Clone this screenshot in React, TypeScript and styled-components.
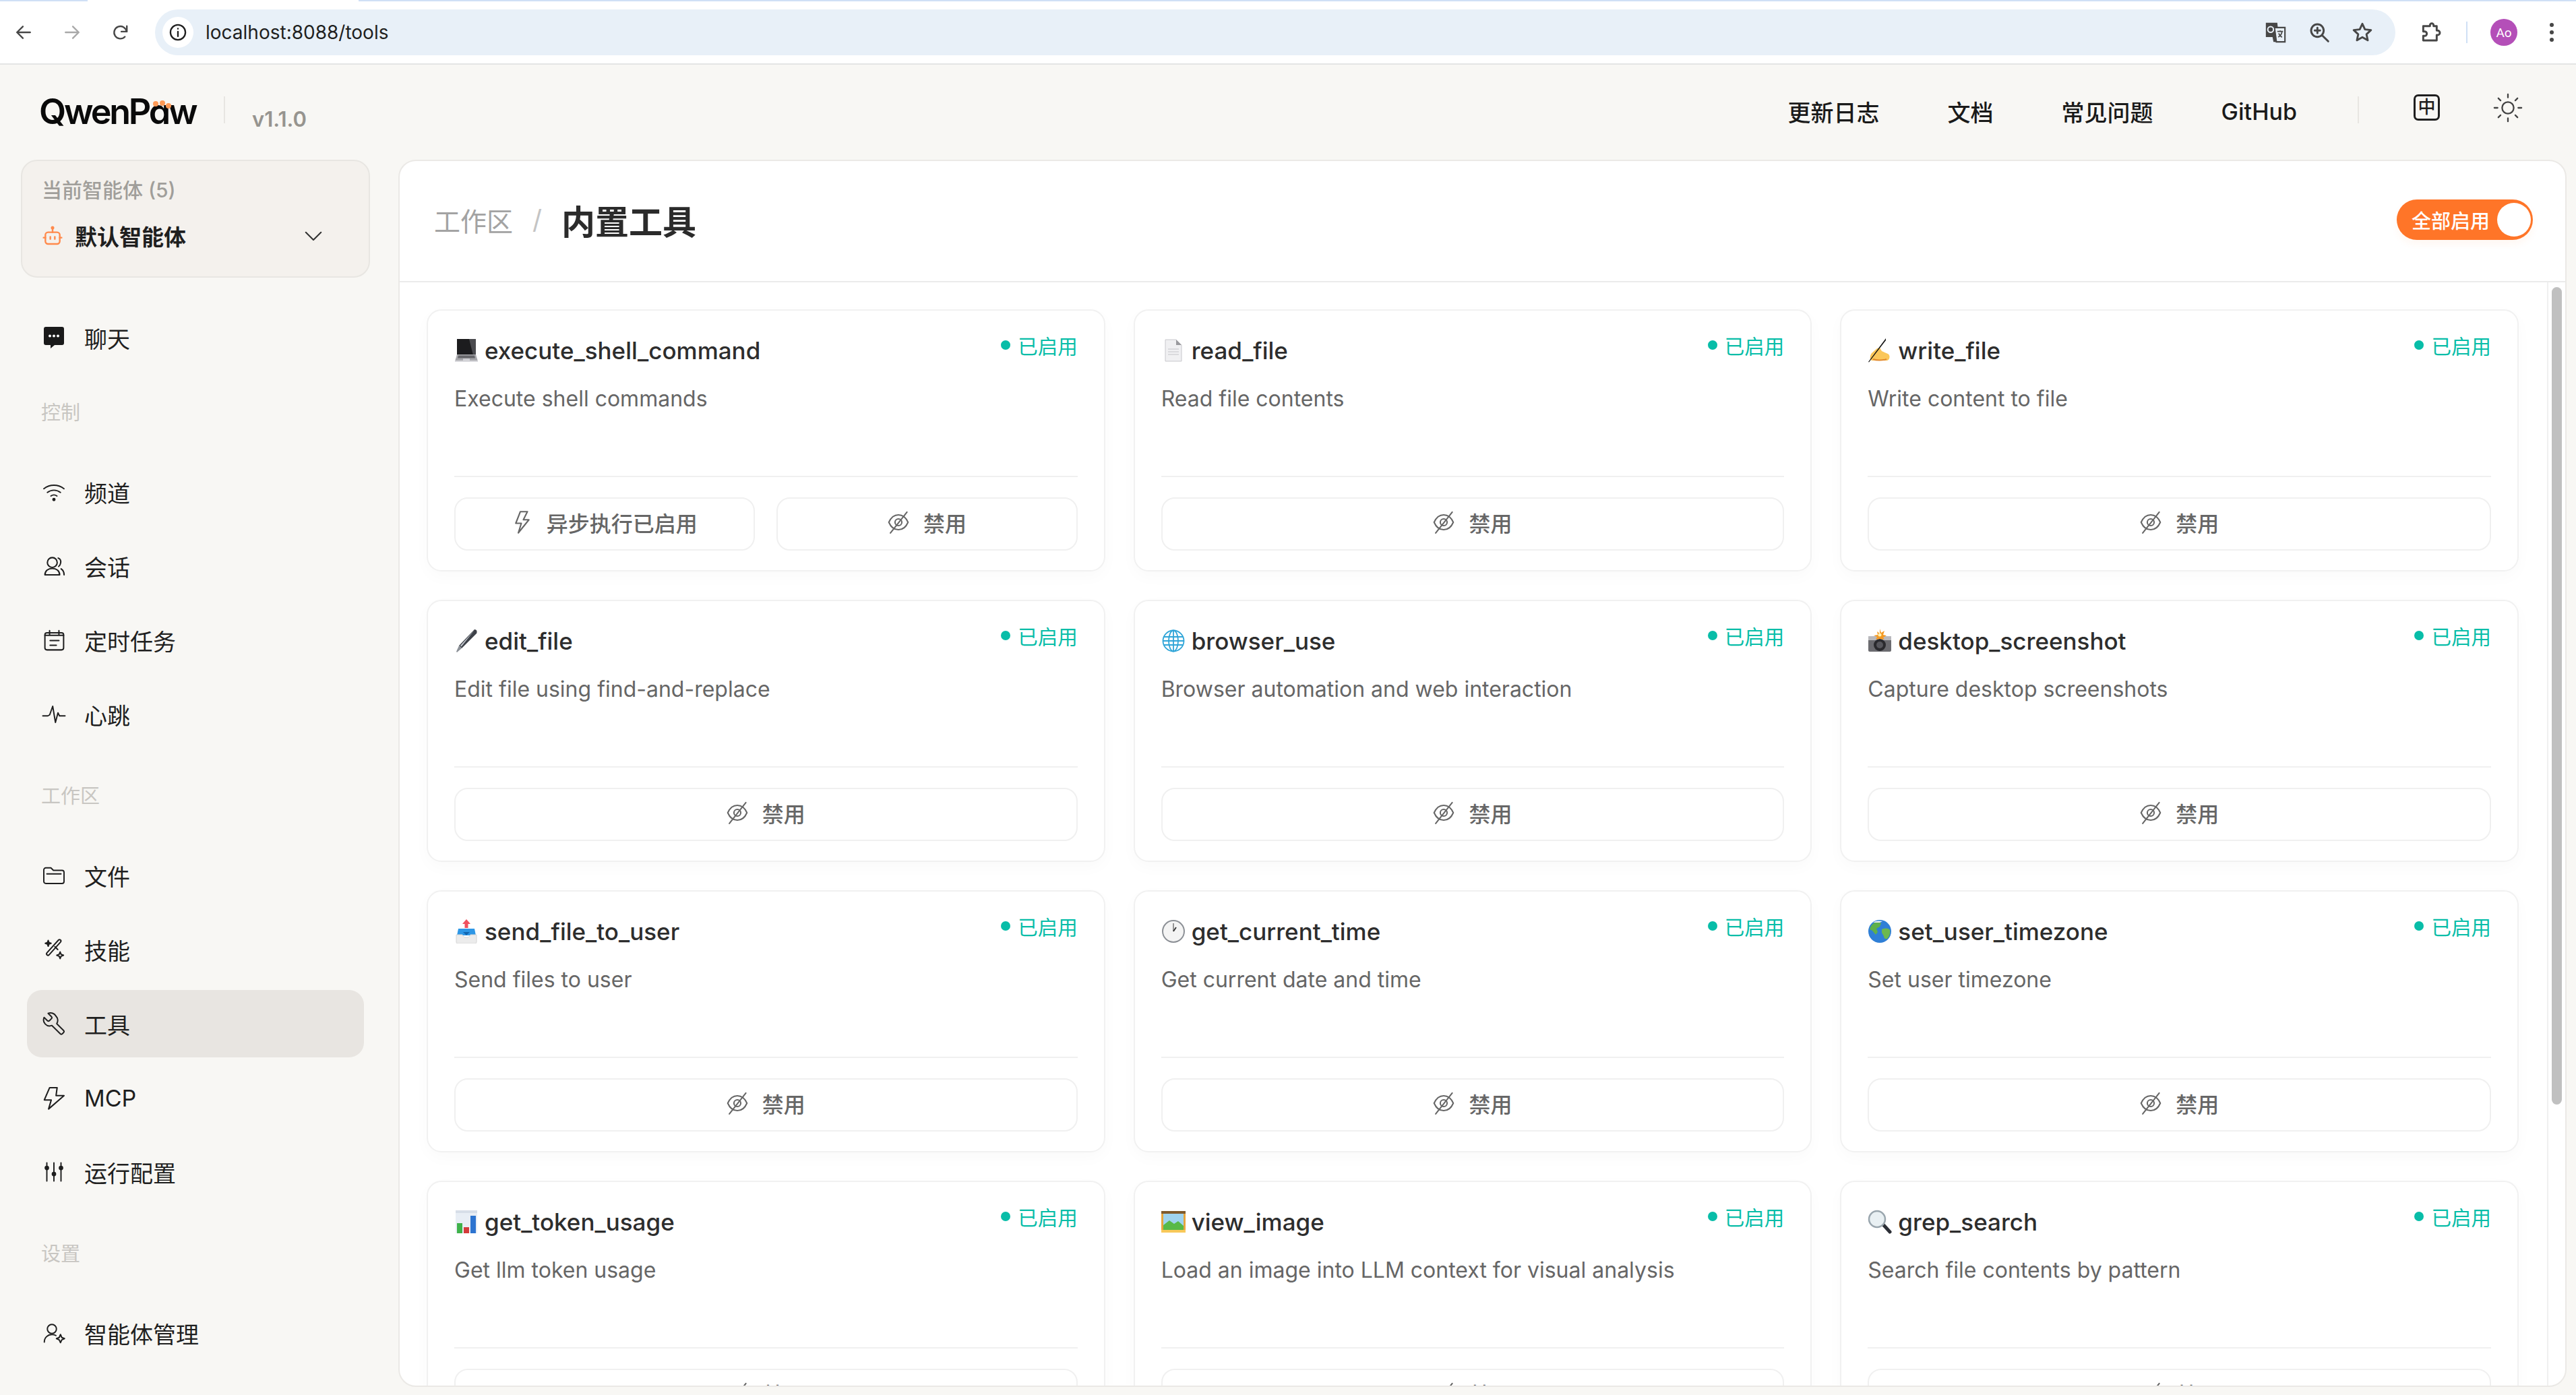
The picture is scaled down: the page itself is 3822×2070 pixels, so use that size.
import React from "react";
import styled, { createGlobalStyle } from "styled-components";

const FONT = `Inter, "Noto Sans CJK SC", "Noto Sans", sans-serif`;

const Global = createGlobalStyle`
  * { box-sizing: border-box; }
  html, body { margin: 0; padding: 0; background: #f8f7f4; }
  body { font-family: ${FONT}; overflow: hidden; }
`;

const Page = styled.div`
  width: 3822px; height: 2070px; display: flex; flex-direction: column;
  overflow: hidden; background: #f8f7f4; color: #1f1f1f;
`;

/* browser chrome */
const TabStrip = styled.div`
  height: 2px; flex: none;
  background: linear-gradient(90deg, #cfe0f5 0 130px, #fff 130px 532px, #cfe0f5 532px);
`;
const Chrome = styled.div`
  height: 94px; flex: none; background: #fff; border-bottom: 2px solid #e4e4e4;
  display: flex; align-items: center; padding: 0 0 0 22px;
`;
const NavCluster = styled.div`
  display: flex; align-items: center; gap: 46px; width: 208px; flex: none; color: #474747;
  svg:nth-child(2) { color: #a9a9a9; }
`;
const Omni = styled.div`
  width: 3324px; height: 68px; flex: none; border-radius: 34px; background: #e8f0f8;
  display: flex; align-items: center; padding: 0 33px 0 11px;
`;
const InfoChip = styled.div`
  width: 46px; height: 46px; border-radius: 50%; background: #fff; flex: none;
  display: flex; align-items: center; justify-content: center; color: #1f1f1f;
`;
const Url = styled.div`
  margin-left: 18px; font-size: 28px; color: #1f1f1f; flex: 1;
`;
const OmniIcons = styled.div`
  display: flex; align-items: center; gap: 32px; color: #474747;
`;
const ChromeRight = styled.div`
  display: flex; align-items: center; margin-left: 36px; color: #474747;
`;
const ChromeDivider = styled.div`
  width: 2px; height: 32px; background: #cfe0f5; margin: 0 34px 0 37px;
`;
const Avatar = styled.div`
  width: 40px; height: 40px; border-radius: 50%; background: #b44fb8; color: #fff;
  font-size: 19px; display: flex; align-items: center; justify-content: center; font-family: Roboto, sans-serif;
`;
const Dots = styled.div`
  margin-left: 48px; display: flex; flex-direction: column; gap: 5px;
  i { width: 6px; height: 6px; border-radius: 50%; background: #474747; display: block; }
`;

/* app header */
const AppHeader = styled.header`
  height: 141px; flex: none; display: flex; align-items: center; padding: 0 0 0 58px;
`;
const LogoWrap = styled.div`
  position: relative; width: 235px; height: 60px; margin-top: -2px; display: flex; align-items: center;
`;
const LogoText = styled.span`
  font-size: 52px; font-weight: 600; color: #0a0a0a; letter-spacing: -3.2px; line-height: 60px;
  font-feature-settings: "cv11" 1; white-space: nowrap;
`;
const PawDot = styled.i<{ $x: number; $y: number }>`
  position: absolute; width: 8px; height: 8px; border-radius: 50%; background: #ff9a56;
  left: ${(p) => p.$x}px; top: ${(p) => p.$y}px;
`;
const LogoDivider = styled.div`
  width: 2px; height: 40px; background: #e8e6e2; margin: -8px 0 0 39px;
`;
const Version = styled.span`
  margin: 20px 0 0 40px; font-size: 31px; font-weight: 600; color: #96948f;
`;
const TopNav = styled.nav`
  margin-left: auto; display: flex; align-items: center; gap: 101px; margin-right: 90px;
  font-size: 34px; font-weight: 500; color: #1a1a1a; margin-top: -2px;
`;
const TopDivider = styled.div`
  width: 2px; height: 40px; background: #e8e6e2; margin-top: -8px;
`;
const LangIcon = styled.div`
  width: 39px; height: 39px; border: 3px solid #1f1f1f; border-radius: 7px; margin: -14px 0 0 81px;
  font-size: 26px; font-weight: 500; line-height: 32px; text-align: center; color: #1f1f1f;
`;
const SunWrap = styled.div`
  margin: -14px 78px 0 78px; color: #444; display: flex;
`;

/* layout */
const Body = styled.div`
  flex: 1; min-height: 0; display: flex; padding: 0 14px 12px 0;
`;
const Sidebar = styled.aside`
  width: 591px; flex: none; padding-left: 31px; overflow: hidden;
`;
const AgentCard = styled.div`
  width: 518px; height: 175px; border: 2px solid #e8e6e2; border-radius: 24px; background: #f4f1ed;
  padding: 21px 64px 0 29px;
`;
const AgentLabel = styled.div`
  font-size: 30px; line-height: 44px; color: #a09e9a; font-weight: 500;
`;
const AgentRow = styled.div`
  display: flex; align-items: center; margin-top: 24px; height: 44px;
`;
const AgentName = styled.span`
  font-size: 33px; font-weight: 700; color: #1f1f1f; margin-left: 17px; flex: 1;
`;
const Nav = styled.nav`
  display: flex; flex-direction: column; gap: 10px; margin: 39px 0 0 9px; width: 500px;
`;
const NavItem = styled.div<{ $active?: boolean }>`
  height: 100px; flex: none; display: flex; align-items: center; gap: 29px; padding-left: 24px;
  border-radius: 22px; font-size: 34px; color: #1f1f1f;
  background: ${(p) => (p.$active ? "#e8e5e1" : "transparent")};
`;
const NavIconBox = styled.span`
  width: 32px; height: 32px; flex: none; display: flex; align-items: center; justify-content: center;
`;
const NavLabel = styled.div<{ $first?: boolean }>`
  height: 40px; line-height: 40px; font-size: 29px; color: #c8c6c2; padding-left: 21px; flex: none;
  margin: ${(p) => (p.$first ? "32px" : "42px")} 0 ${(p) => (p.$first ? "37px" : "37px")};
`;

/* main panel */
const Panel = styled.main`
  flex: 1; min-width: 0; background: #fff; border: 2px solid #ebe9e6; border-radius: 26px;
  display: flex; flex-direction: column; overflow: hidden;
`;
const PanelHead = styled.div`
  height: 180px; flex: none; border-bottom: 2px solid #ebebeb; display: flex; align-items: center;
  padding: 0 48px 5px 51px;
`;
const Crumb = styled.span`
  font-size: 39px; color: #a3a3a3;
`;
const Slash = styled.span`
  font-size: 39px; color: #c4c4c4; margin: 0 29px;
`;
const PageTitle = styled.h1`
  margin: 0; font-size: 50px; font-weight: 700; color: #2b2b2b; flex: 1;
`;
const Toggle = styled.div`
  width: 202px; height: 60px; border-radius: 30px; background: #ff7528; flex: none;
  display: flex; align-items: center; justify-content: space-between; padding: 0 3px 0 22px;
  box-shadow: 0 6px 12px rgba(255, 117, 40, 0.06);
  color: #fff; font-size: 29px; font-weight: 500;
`;
const Knob = styled.i`
  width: 50px; height: 50px; border-radius: 50%; background: #fff; display: block;
`;
const PanelBody = styled.div`
  flex: 1; min-height: 0; display: flex;
`;
const Scroller = styled.div`
  flex: 1; min-width: 0; overflow: hidden; padding: 40px 42px 0 40px;
`;
const Track = styled.div`
  width: 27px; flex: none; border-left: 2px solid #f0f0f0; padding: 7px 0 0 5px;
`;
const Thumb = styled.div`
  width: 15px; height: 1213px; border-radius: 8px; background: #c0c0c0;
`;
const Grid = styled.div`
  display: grid; grid-template-columns: repeat(3, 1fr); column-gap: 42px; row-gap: 42px;
`;
const Card = styled.article`
  height: 389px; border: 2px solid #f1f1f1; border-radius: 22px; background: #fff;
  box-shadow: 0 8px 24px rgba(0, 0, 0, 0.025);
  padding: 0 39px 29px 39px; display: flex; flex-direction: column;
`;
const CardHead = styled.div`
  display: flex; justify-content: space-between; align-items: flex-start;
`;
const Title = styled.div`
  margin-top: 36px; height: 46px; display: flex; align-items: center; gap: 9px;
  font-size: 35px; font-weight: 500; color: #2d2d2d;
`;
const Status = styled.div`
  margin-top: 33px; height: 36px; display: flex; align-items: center; gap: 11px;
  font-size: 29.500px; color: #08bda8;
  &::before { content: ""; width: 14px; height: 14px; border-radius: 50%; background: #08bda8; }
`;
const Desc = styled.div`
  margin-top: 27px; font-size: 32px; line-height: 44px; color: #666;
`;
const CardFoot = styled.div`
  margin-top: auto; border-top: 2px solid #f0f0f0; padding-top: 30px; display: flex; gap: 32px;
`;
const ActionButton = styled.div`
  flex: 1; height: 79px; border: 2px solid #f0f0f0; border-radius: 20px; background: #fff;
  display: flex; align-items: center; justify-content: center; gap: 21px; padding-bottom: 6px;
  font-size: 32px; font-weight: 500; color: #666;
`;
const ButtonIcon = styled.span<{ $w: number }>`
  width: ${(p) => p.$w}px; height: 34px; flex: none; display: flex; align-items: center; justify-content: center;
`;

/* icons */
const Line = styled.svg.attrs({ fill: "none", stroke: "currentColor", strokeLinecap: "round", strokeLinejoin: "round" })`
  display: block; flex: none;
`;
type IP = { s?: number; w?: number; c?: string; children: React.ReactNode };
const Ico = ({ s = 32, w = 1.6, c, children }: IP) => (
  <Line width={s} height={s} viewBox="0 0 24 24" strokeWidth={w} style={c ? { color: c } : undefined}>{children}</Line>
);

const EyeOff = () => (
  <ButtonIcon $w={32}>
    <Ico s={38} w={1.300}>
      <path d="M3 12c2-4.600 5.200-7 9-7s7 2.400 9 7c-2 4.600-5.200 7-9 7s-7-2.400-9-7Z" />
      <circle cx="12" cy="12" r="3.200" />
      <path d="M20 2.500 4.500 22" />
    </Ico>
  </ButtonIcon>
);
const Bolt = () => (
  <ButtonIcon $w={30}>
    <Ico s={36} w={1.400}>
      <path d="M17 1.500H10L5.500 13H11L8 22.500 18.500 9.500H13Z" />
    </Ico>
  </ButtonIcon>
);

const Emoji = ({ name }: { name: string }) => {
  const art: Record<string, React.ReactNode> = {
    laptop: (
      <>
        <rect x="4" y="1" width="28" height="24" fill="#1c1c1e" />
        <path d="M22 1h10v24h-4Z" fill="#4a4a4e" />
        <path d="M4 24h28l3 10H1Z" fill="#a8a8ac" />
        <path d="M6 25.500h24l1 4H5Z" fill="#66666a" />
        <rect x="13" y="30" width="10" height="4" fill="#d0d0d4" />
        <rect x="1" y="33" width="34" height="2" fill="#d8d8dc" />
      </>
    ),
    page: (
      <>
        <path d="M6 2h16l8 8v24H6Z" fill="#f0f0f2" stroke="#c8c8cc" />
        <path d="M22 2v8h8Z" fill="#9a9a9e" />
        <path d="M10 16h16M10 20h16M10 24h16" stroke="#c4c4c8" strokeWidth="1.200" />
      </>
    ),
    write: (
      <>
        <path d="M6 33c-3-2-3-7 0-11l8-7 4-1 3 5 9 4c4 2 3 9-1 10Z" fill="#fbc75a" />
        <path d="M8 31c5 2 14 2 20 0" stroke="#e28a2e" strokeWidth="2" fill="none" />
        <path d="M27 0 1 35l1 .5L27 3Z" fill="#111" />
      </>
    ),
    pen: (
      <>
        <path d="M30 1c4 0 4 4 3 6L11 29 7 25Z" fill="#3d4148" />
        <path d="M30 2 9 25l1.500 1.500Z" fill="#c7ccd3" />
        <path d="M7 25l4 4-7 6-1-1Z" fill="#8b9097" />
      </>
    ),
    globe: (
      <g fill="none" stroke="#2fa5d8" strokeWidth="1.800">
        <circle cx="18" cy="18" r="15.500" />
        <ellipse cx="18" cy="18" rx="7" ry="15.500" />
        <path d="M18 2.500v31M3 12h30M3 24h30M2.500 18h31" />
      </g>
    ),
    camera: (
      <>
        <rect x="1" y="11" width="34" height="23" rx="2" fill="#6b6b70" />
        <rect x="1" y="11" width="34" height="6" fill="#b8b8bc" />
        <circle cx="18" cy="24" r="9" fill="#2a2a2e" />
        <circle cx="18" cy="24" r="5" fill="#56565c" />
        <path d="M18 0l2 6 5-3-2 6 5 1-5 3 2 3-7-1-6 1 2-4-5-2 6-1-1-5 4 3Z" fill="#f59a23" />
        <circle cx="18" cy="9" r="2.500" fill="#fff2b0" />
      </>
    ),
    outbox: (
      <>
        <path d="M18 0l6 7h-3.500v6h-5V7H12Z" fill="#f0525f" />
        <path d="M6 14h24l2 10H4Z" fill="#2e97e6" />
        <path d="M18 24l-5-5h10Z" fill="#1266b0" />
        <path d="M3 23h9c1 3 3 4 6 4s5-1 6-4h9v11a2 2 0 0 1-2 2H5a2 2 0 0 1-2-2Z" fill="#ececec" stroke="#d4d4d4" />
      </>
    ),
    clock: (
      <>
        <circle cx="18" cy="18" r="17" fill="#8c9096" />
        <circle cx="18" cy="18" r="15" fill="#f4f4f4" />
        <path d="M18 18V6" stroke="#777" strokeWidth="1.500" />
        <path d="M18 18l4-6" stroke="#333" strokeWidth="1.800" />
      </>
    ),
    earth: (
      <>
        <circle cx="18" cy="18" r="17" fill="#2f7fd6" />
        <path d="M9 6c4-2 9-2 11 0l-2 5-5 3 2 5-3 4-5-6-4-2c1-4 3-7 6-9Z" fill="#5fb04a" />
        <path d="M21 15c4-2 9-2 12 1 1 5-1 10-4 13-3 1-5-1-5-4l-3-5Z" fill="#6cb84f" />
        <path d="M8 5c3-3 10-3 14-2l-4 2Z" fill="#e8edf0" />
      </>
    ),
    chart: (
      <>
        <rect x="2" y="1" width="32" height="34" fill="#e8eef5" />
        <rect x="2" y="1" width="32" height="4" fill="#d7dee8" />
        <rect x="4" y="20" width="8" height="15" fill="#3fb24a" />
        <rect x="14" y="26" width="8" height="9" fill="#d43a3a" />
        <rect x="24" y="9" width="8" height="26" fill="#2d74d0" />
      </>
    ),
    image: (
      <>
        <rect x="0" y="2" width="36" height="32" fill="#e7a63d" />
        <rect x="3" y="5" width="30" height="26" fill="#9fd3ee" />
        <path d="M3 23l9-7 7 5 6-4 8 7v7H3Z" fill="#58b947" />
        <rect x="0" y="2" width="36" height="4" fill="#7f5a2c" />
        <rect x="0" y="30" width="36" height="4" fill="#f8c95a" />
      </>
    ),
    search: (
      <>
        <path d="M22 21l11 12" stroke="#2c2f36" strokeWidth="5" strokeLinecap="round" />
        <circle cx="14" cy="14" r="12" fill="#e9f0f3" stroke="#9aa6ae" strokeWidth="2.500" />
      </>
    ),
  };
  return <svg width="36" height="36" viewBox="0 0 36 36" style={{ display: "block", flex: "none" }}>{art[name]}</svg>;
};

const tools = [
  ["laptop", "execute_shell_command", "Execute shell commands", true],
  ["page", "read_file", "Read file contents"],
  ["write", "write_file", "Write content to file"],
  ["pen", "edit_file", "Edit file using find-and-replace"],
  ["globe", "browser_use", "Browser automation and web interaction"],
  ["camera", "desktop_screenshot", "Capture desktop screenshots"],
  ["outbox", "send_file_to_user", "Send files to user"],
  ["clock", "get_current_time", "Get current date and time"],
  ["earth", "set_user_timezone", "Set user timezone"],
  ["chart", "get_token_usage", "Get llm token usage"],
  ["image", "view_image", "Load an image into LLM context for visual analysis"],
  ["search", "grep_search", "Search file contents by pattern"],
] as [string, string, string, boolean?][];

const navIcons: Record<string, React.ReactNode> = {
  chat: (
    <svg width="32" height="34" viewBox="0 0 32 34" style={{ display: "block", flex: "none" }}>
      <path d="M4 1h24a3 3 0 0 1 3 3v21a3 3 0 0 1-3 3H17l-6 5v-5H4a3 3 0 0 1-3-3V4a3 3 0 0 1 3-3Z" fill="#1a1a1a" />
      <circle cx="10" cy="14.500" r="2" fill="#fff" /><circle cx="16" cy="14.500" r="2" fill="#fff" /><circle cx="22" cy="14.500" r="2" fill="#fff" />
    </svg>
  ),
  wifi: <Ico s={36} w={1.300}><path d="M2 8.800c6-4.600 14-4.600 20 0" /><path d="M5.500 12.500c4-3 9-3 13 0" /><path d="M9 16c1.800-1.300 4.200-1.300 6 0" /><circle cx="12" cy="19.500" r="1" fill="currentColor" /></Ico>,
  users: <Ico s={35} w={1.400}><circle cx="10" cy="8" r="5" /><path d="M2.500 20.500c0-4 3.300-6.500 7.500-6.500s7.500 2.500 7.500 6.500Z" /><path d="M16 3.500c2 .8 3 2.500 2.500 5s-1.200 3-2 3.500" /><path d="M19 14.500c2 1.300 3 3.500 3 6" /></Ico>,
  calendar: <Ico s={37} w={1.300}><rect x="3" y="4.500" width="18" height="16.500" rx="2" /><path d="M7.500 2.500v4M16.500 2.500v4M3 7h18M8 12h8.500M8 16.500h6" /></Ico>,
  pulse: <Ico s={36} w={1.300}><path d="M1 13.500h5l1.800-1 3-8.500 2.700 16 2.500-9.500 1.500 3h5.500" /></Ico>,
  folder: <Ico s={36} w={1.300}><path d="M2 6.500a2 2 0 0 1 2-2h5l2.500 2.500H20a2 2 0 0 1 2 2v9a2 2 0 0 1-2 2H4a2 2 0 0 1-2-2Z" /><path d="M5 10.500h14" /></Ico>,
  wand: (
    <Ico s={34} w={1.400}>
      <rect x="-1.500" y="-2" width="3" height="21" rx="1.500" transform="translate(17.500 3.500) rotate(42)" />
      <path d="M13 9l3 3" />
      <path d="M6 2.500l.8 2.200L9 5.500l-2.200.8L6 8.500l-.8-2.200L3 5.500l2.200-.8Z" fill="currentColor" />
      <path d="M18.500 14.500l1 2.500 2.500 1-2.500 1-1 2.500-1-2.500-2.500-1 2.500-1Z" />
    </Ico>
  ),
  wrench: <Ico s={36} w={1.300}><path d="M14 4.500A6 6 0 0 0 6.300 1.800l3.200 3.200a1.500 1.500 0 0 1 0 2.100L7.600 9a1.500 1.500 0 0 1-2.100 0L2.300 5.800A6 6 0 0 0 10 13.800l8.300 8.200a1.500 1.500 0 0 0 2 0l1.200-1.200a1.500 1.500 0 0 0 0-2.100L14.800 12a6 6 0 0 0-.8-7.500Z" /></Ico>,
  zap: <Ico s={38} w={1.300}><path d="M15 2.500H8L3 14h6.500L7 22.500 21.500 10h-7.500Z" /></Ico>,
  sliders: <Ico s={36} w={1.300}><path d="M5 3v18M12 3v18M19 3v18" /><circle cx="5" cy="8" r="1.600" fill="currentColor" /><circle cx="12" cy="14" r="1.600" fill="currentColor" /><circle cx="19" cy="8" r="1.600" fill="currentColor" /></Ico>,
  agent: <Ico s={36} w={1.300}><circle cx="10" cy="8" r="4.500" /><path d="M2.500 21c0-4.500 3.500-7.500 7.500-7.500 1.500 0 2.800.3 4 1" /><path d="M18.500 13.500l1.300 3 2.700 1-2.700 1.200-1.300 2.800-1.300-2.800-2.700-1.200 2.700-1Z" /></Ico>,
};

const Item = ({ icon, label, active }: { icon: string; label: string; active?: boolean }) => (
  <NavItem $active={active}><NavIconBox>{navIcons[icon]}</NavIconBox><span>{label}</span></NavItem>
);

export default function App() {
  return (
    <Page>
      <Global />
      <TabStrip />
      <Chrome>
        <NavCluster>
          <Ico s={26} w={2.200}><path d="M21 12H3M11 4l-8 8 8 8" /></Ico>
          <Ico s={26} w={2.200}><path d="M3 12h18M13 4l8 8-8 8" /></Ico>
          <Ico s={26} w={2.200}><path d="M20 11a8.500 8.500 0 1 0-2.200 7" /><path d="M20.500 3.500v7.500H13" /></Ico>
        </NavCluster>
        <Omni>
          <InfoChip>
            <Ico s={28} w={2}><circle cx="12" cy="12" r="9.500" /><path d="M12 11v6M12 7.200v.300" /></Ico>
          </InfoChip>
          <Url>localhost:8088/tools</Url>
          <OmniIcons>
            <svg width="34" height="34" viewBox="0 0 24 24" style={{ display: "block" }}>
              <path d="M2 2h12l2 20h-6L9 17H2Z" fill="#474747" />
              <path d="M11 7h11v15H13Z" fill="#e8f0f8" stroke="#474747" strokeWidth="1.500" />
              <path d="M14 11h6M17 10v1M19 11c-.5 3-2 5-4 6M15.500 13c.8 2 2 3.500 3.500 4" stroke="#474747" strokeWidth="1.200" fill="none" />
              <circle cx="7" cy="9" r="3" fill="none" stroke="#e8f0f8" strokeWidth="1.400" />
            </svg>
            <Ico s={32} w={2.200}><circle cx="10" cy="10" r="7" /><path d="M15.500 15.500 22 22M10 7v6M7 10h6" /></Ico>
            <Ico s={32} w={2.200}><path d="m12 2.500 2.900 6.200 6.700.8-5 4.600 1.400 6.700L12 17.400l-6 3.400 1.400-6.700-5-4.600 6.700-.8Z" /></Ico>
          </OmniIcons>
        </Omni>
        <ChromeRight>
          <Ico s={32} w={2.200}><path d="M9 5h3.500V4a2 2 0 0 1 4 0v1H20v5h1a2.500 2.500 0 0 1 0 5h-1v6H5v-5h1.500a2.500 2.500 0 0 0 0-5H5V5Z" transform="translate(-1 0)" /></Ico>
          <ChromeDivider />
          <Avatar>Ao</Avatar>
          <Dots><i /><i /><i /></Dots>
        </ChromeRight>
      </Chrome>

      <AppHeader>
        <LogoWrap>
          <LogoText>QwenPaw</LogoText>
          <PawDot $x={169} $y={14} />
          <PawDot $x={179} $y={13} />
          <PawDot $x={188} $y={17} />
        </LogoWrap>
        <LogoDivider />
        <Version>v1.1.0</Version>
        <TopNav>
          <span>更新日志</span>
          <span>文档</span>
          <span>常见问题</span>
          <span>GitHub</span>
        </TopNav>
        <TopDivider />
        <LangIcon>中</LangIcon>
        <SunWrap>
          <Ico s={46} w={1.200}>
            <circle cx="12" cy="12" r="4.500" />
            <path d="M12 1.500v2.500M12 20v2.500M1.500 12H4M20 12h2.500M4.600 4.600l1.700 1.700M17.700 17.700l1.700 1.700M4.600 19.400l1.700-1.700M17.700 6.300l1.700-1.700" />
          </Ico>
        </SunWrap>
      </AppHeader>

      <Body>
        <Sidebar>
          <AgentCard>
            <AgentLabel>当前智能体 (5)</AgentLabel>
            <AgentRow>
              <Ico s={32} w={1.800} c="#ff8a4c">
                <rect x="4" y="8" width="16" height="13" rx="3" />
                <path d="M12 8V3.500M2 14h2M20 14h2M9.500 13v2.500M14.500 13v2.500" />
                <circle cx="12" cy="3" r="1" />
              </Ico>
              <AgentName>默认智能体</AgentName>
              <Ico s={36} w={1.400} c="#333"><path d="m4.500 8.500 7.500 7.500 7.500-7.500" /></Ico>
            </AgentRow>
          </AgentCard>
          <Nav>
            <Item icon="chat" label="聊天" />
            <NavLabel $first>控制</NavLabel>
            <Item icon="wifi" label="频道" />
            <Item icon="users" label="会话" />
            <Item icon="calendar" label="定时任务" />
            <Item icon="pulse" label="心跳" />
            <NavLabel>工作区</NavLabel>
            <Item icon="folder" label="文件" />
            <Item icon="wand" label="技能" />
            <Item icon="wrench" label="工具" active />
            <Item icon="zap" label="MCP" />
            <Item icon="sliders" label="运行配置" />
            <NavLabel>设置</NavLabel>
            <Item icon="agent" label="智能体管理" />
          </Nav>
        </Sidebar>

        <Panel>
          <PanelHead>
            <Crumb>工作区</Crumb>
            <Slash>/</Slash>
            <PageTitle>内置工具</PageTitle>
            <Toggle><span>全部启用</span><Knob /></Toggle>
          </PanelHead>
          <PanelBody>
            <Scroller>
              <Grid>
                {tools.map(([icon, name, desc, async_]) => (
                  <Card key={name}>
                    <CardHead>
                      <Title><Emoji name={icon} />{name}</Title>
                      <Status>已启用</Status>
                    </CardHead>
                    <Desc>{desc}</Desc>
                    <CardFoot>
                      {async_ && <ActionButton><Bolt />异步执行已启用</ActionButton>}
                      <ActionButton><EyeOff />禁用</ActionButton>
                    </CardFoot>
                  </Card>
                ))}
              </Grid>
            </Scroller>
            <Track><Thumb /></Track>
          </PanelBody>
        </Panel>
      </Body>
    </Page>
  );
}
